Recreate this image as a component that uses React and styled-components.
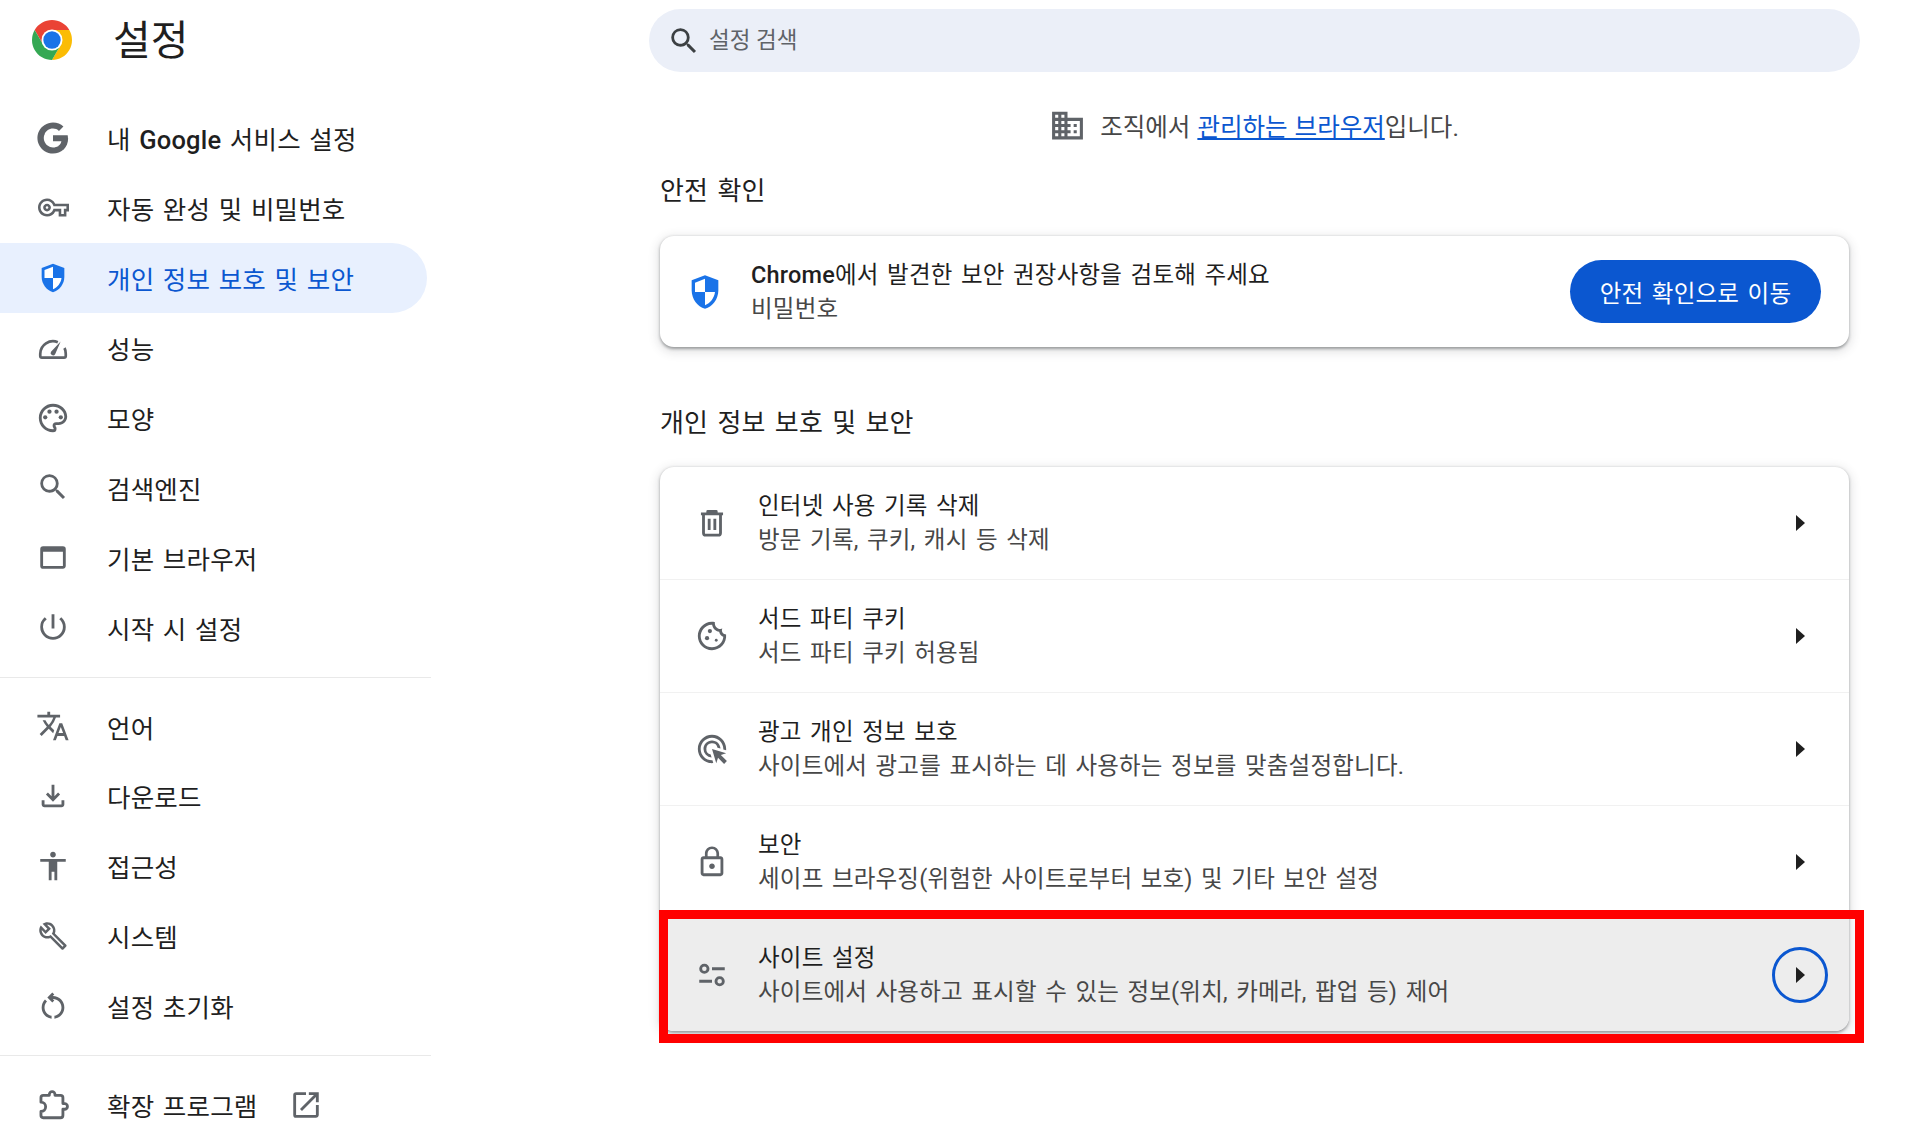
import React from 'react';
import styled, { createGlobalStyle } from 'styled-components';
import {
  MdOutlineVpnKey, MdOutlinePalette, MdSearch, MdOutlinePowerSettingsNew, MdTranslate,
  MdOutlineBuild, MdOpenInNew, MdOutlineCookie,
  MdOutlineAdsClick, MdLockOutline, MdOutlineDomain, MdAccessibility, MdOutlineRestartAlt,
  MdOutlineFileDownload, MdOutlineWebAsset,
} from 'react-icons/md';

const Global = createGlobalStyle`
  html, body { margin: 0; padding: 0; background: #fff; }
  body { font-family: Roboto, "Noto Sans CJK KR", "Noto Sans", sans-serif; color: #1f1f1f; }
  * { box-sizing: border-box; }
`;

const Page = styled.div`
  display: grid;
  grid-template-columns: 431px 1212px;
  column-gap: 217px;
  width: 1920px;
  height: 1125px;
  overflow: hidden;
`;

const Sidebar = styled.aside`
  display: flex;
  flex-direction: column;
`;

const Brand = styled.div`
  display: flex;
  align-items: center;
  gap: 41px;
  height: 103px;
  padding: 0 0 24px 32px;
`;

const BrandTitle = styled.h1`
  margin: 4px 0 0;
  font-size: 41px;
  font-weight: 400;
  line-height: 1;
`;

const NavGroup = styled.nav`
  display: flex;
  flex-direction: column;
`;

const NavItem = styled.div`
  display: flex;
  align-items: center;
  gap: 37px;
  height: 69.9px;
  width: ${(p) => (p.$active ? '427px' : '431px')};
  padding-left: 36px;
  font-size: 25.5px;
  letter-spacing: 0.2px;
  word-spacing: 2px;
  color: ${(p) => (p.$active ? '#0b57d0' : '#1f1f1f')};
  background: ${(p) => (p.$active ? '#e8f0fe' : 'transparent')};
  border-radius: 0 35px 35px 0;
  svg { color: ${(p) => (p.$active ? '#1a73e8' : '#5f6368')}; }
`;

const NavIcon = styled.span`
  display: flex;
  align-items: center;
  justify-content: center;
  width: 34px;
  height: 34px;
  flex: none;
  font-size: ${(p) => p.$size || 34}px;
`;

const NavLabel = styled.span`
  white-space: pre;
`;

const BrandWord = styled.span`
  font-weight: 500;
`;

const ExternalIcon = styled.span`
  display: flex;
  margin-left: -6px;
  font-size: 34px;
  color: #5f6368;
`;

const Divider = styled.hr`
  margin: ${(p) => p.$top}px 0 ${(p) => p.$bottom}px;
  border: 0;
  border-top: 1px solid #e9e9e9;
`;

const Main = styled.main`
  display: flex;
  flex-direction: column;
  padding-top: 9px;
`;

const SearchBar = styled.div`
  display: flex;
  align-items: center;
  gap: 8px;
  height: 63px;
  margin-left: 1px;
  padding-left: 18px;
  border-radius: 32px;
  background: #ebeff8;
  font-size: 22.5px;
  color: #5f6368;
  svg { color: #3c4043; }
`;

const SearchLabel = styled.span`
  margin-top: -5px;
`;

const ManagedLine = styled.div`
  display: flex;
  align-items: center;
  justify-content: center;
  height: 32px;
  margin-top: 37px;
  font-size: 24.5px;
  word-spacing: 1px;
  color: #474747;
  white-space: pre;
  svg { color: #5f6368; margin-right: 14px; }
`;

const ManagedLink = styled.a`
  color: #0b57d0;
  text-decoration: underline;
`;

const SectionTitle = styled.h2`
  margin: ${(p) => p.$top}px 0 ${(p) => p.$bottom}px 12px;
  height: 32px;
  line-height: 32px;
  font-size: 26px;
  letter-spacing: 0.2px;
  word-spacing: 2.5px;
  font-weight: 400;
  color: #1f1f1f;
`;

const Card = styled.section`
  position: relative;
  width: 1189px;
  margin-left: 12px;
  background: #fff;
  border-radius: 14px;
  box-shadow: 0 1.5px 3px rgba(60, 64, 67, 0.45), 0 3px 10px 3px rgba(60, 64, 67, 0.13);
`;

const SafetyRow = styled.div`
  display: flex;
  align-items: center;
  height: 111.4px;
  padding: 0 28px 0 25px;
  svg { color: #1a73e8; flex: none; }
`;

const SafetyText = styled.div`
  flex: 1;
  margin-left: 26px;
  padding-top: 2px;
`;

const PrimaryLine = styled.div`
  font-size: 23.5px;
  line-height: 34px;
  letter-spacing: 0.2px;
  word-spacing: 2.4px;
  color: #1f1f1f;
`;

const SecondaryLine = styled.div`
  font-size: 23.5px;
  line-height: 35px;
  letter-spacing: 0.2px;
  word-spacing: 2.4px;
  color: #474747;
`;

const ActionButton = styled.button`
  width: 251px;
  height: 63px;
  border: 0;
  border-radius: 32px;
  background: #0b57d0;
  color: #fff;
  font: inherit;
  font-size: 23.5px;
  letter-spacing: 0.2px;
  word-spacing: 2.4px;
`;

const Row = styled.div`
  position: relative;
  display: flex;
  align-items: center;
  height: 112.9px;
  padding: 0 28px 0 35px;
  border-bottom: ${(p) => (p.$last ? '0' : '1px solid #f1f1f1')};
  background: ${(p) => (p.$selected ? '#ededed' : 'transparent')};
  border-radius: ${(p) => (p.$last ? '0 0 14px 14px' : '0')};
`;

const RowIcon = styled.span`
  display: flex;
  align-items: center;
  justify-content: center;
  width: 34px;
  font-size: 34px;
  flex: none;
  color: #5f6368;
`;

const RowText = styled.div`
  flex: 1;
  margin-left: 29px;
  padding-top: 2px;
`;

const ArrowSlot = styled.span`
  display: flex;
  align-items: center;
  justify-content: center;
  width: 56px;
  height: 56px;
  margin-right: -7px;
  border-radius: 50%;
  border: ${(p) => (p.$focused ? '3px solid #0b57d0' : '0')};
`;

const Highlight = styled.div`
  position: absolute;
  left: -1px;
  right: -15px;
  top: -8.6px;
  bottom: -11.5px;
  border: 9px solid #f00;
  pointer-events: none;
`;

const ShieldIcon = ({ size = 34 }) => (
  <svg width={size} height={size} viewBox="0 0 24 24">
    <path fill="currentColor" d="M12 2 4 5v6.1c0 5 3.4 9.7 8 10.9 4.6-1.2 8-5.9 8-10.9V5z" />
    <path fill="#fff" d="M12 4.1 6 6.4V12h6zM12 12h6c-.4 3.6-2.9 6.8-6 7.9z" />
  </svg>
);

const ChromeLogo = () => (
  <svg width="40" height="40" viewBox="0 0 48 48" style={{ flex: 'none' }}>
    <path fill="#ea4335" d="M3.22 12A24 24 0 0 1 44.78 12L24 12 24 24 13.61 30z" />
    <path fill="#fbbc04" d="M44.78 12A24 24 0 0 1 24 48L34.39 30 24 24 24 12z" />
    <path fill="#34a853" d="M24 48A24 24 0 0 1 3.22 12L13.61 30 24 24 34.39 30z" />
    <circle cx="24" cy="24" r="12.6" fill="#fff" />
    <circle cx="24" cy="24" r="10.4" fill="#1a73e8" />
  </svg>
);

const GoogleG = () => (
  <svg width="34" height="34" viewBox="0 0 24 24" fill="currentColor">
    <path d="M22.56 12.25c0-.78-.07-1.53-.2-2.25H12v4.26h5.92c-.26 1.37-1.04 2.53-2.08 3.23v2.77h3.57c2.08-1.92 3.28-4.74 3.28-8.01z" />
    <path d="M12 23c2.97 0 5.46-.98 7.28-2.66l-3.57-2.77c-.98.66-2.23 1.06-3.71 1.06-2.86 0-5.29-1.93-6.16-4.53H2.18v2.84C3.99 20.53 7.7 23 12 23z" />
    <path d="M5.84 14.09c-.22-.66-.35-1.36-.35-2.09s.13-1.43.35-2.09V7.07H2.18C1.43 8.55 1 10.22 1 12s.43 3.45 1.18 4.93l2.85-2.22.81-.62z" />
    <path d="M12 5.38c1.62 0 3.06.56 4.21 1.64l3.15-3.15C17.45 2.09 14.97 1 12 1 7.7 1 3.99 3.47 2.18 7.07l3.66 2.84c.87-2.6 3.3-4.53 6.16-4.53z" />
  </svg>
);

const GaugeIcon = () => (
  <svg width="34" height="34" viewBox="0 0 24 24" fill="none" stroke="currentColor" strokeWidth="1.9" strokeLinejoin="round">
    <path d="M15.4 7.9A9 9 0 0 0 3 16v1.6q0 1.2 1.2 1.2h15.6q1.2 0 1.2-1.2V16q0-2.3-.9-4" />
    <path d="M10.6 14.6 17.4 7.4l-3.9 9a1.7 1.7 0 0 1-2.9-1.8z" fill="currentColor" stroke="none" />
  </svg>
);

const TuneIcon = () => (
  <svg width="34" height="34" viewBox="0 0 24 24" fill="none" stroke="currentColor" strokeWidth="2">
    <circle cx="6.6" cy="7.6" r="2.6" />
    <path d="M12 7.6h9M3 16.4h9" />
    <circle cx="17.4" cy="16.4" r="2.6" />
  </svg>
);

const TrashIcon = () => (
  <svg width="34" height="34" viewBox="0 0 24 24" fill="none" stroke="currentColor" strokeWidth="2" strokeLinejoin="round">
    <path d="M4.2 5.6h15.6M9 5.6V3.8h6v1.8" />
    <path d="M6 5.6V19q0 1.6 1.6 1.6h8.8q1.6 0 1.6-1.6V5.6" />
    <path d="M10 9v8M14 9v8" />
  </svg>
);

const PuzzleIcon = () => (
  <svg width="34" height="34" viewBox="0 0 24 24" fill="none" stroke="currentColor" strokeWidth="2" strokeLinejoin="round">
    <path d="M3.5 6.8Q3.5 5.2 5.1 5.2H9.4V4.6a2 2 0 0 1 4 0V5.2h3.9Q19 5.2 19 6.8V11h1.2a2 2 0 0 1 0 4H19v4.2Q19 21 17.3 21H5.1Q3.5 21 3.5 19.3V16.6a3.3 3.3 0 0 0 0-6.6z" />
  </svg>
);

const ArrowIcon = () => (
  <svg width="9" height="16" viewBox="0 0 9 16">
    <path fill="#1f1f1f" d="M0 0 9 8 0 16z" />
  </svg>
);

const navTop = [
  [<>내 <BrandWord>Google</BrandWord> 서비스 설정</>, <GoogleG />],
  ['자동 완성 및 비밀번호', <MdOutlineVpnKey />, false, 31],
  ['개인 정보 보호 및 보안', <ShieldIcon />, true],
  ['성능', <GaugeIcon />],
  ['모양', <MdOutlinePalette />],
  ['검색엔진', <MdSearch />],
  ['기본 브라우저', <MdOutlineWebAsset />, false, 37],
  ['시작 시 설정', <MdOutlinePowerSettingsNew />],
];

const navMiddle = [
  ['언어', <MdTranslate />],
  ['다운로드', <MdOutlineFileDownload />],
  ['접근성', <MdAccessibility />],
  ['시스템', <MdOutlineBuild />, false, 30],
  ['설정 초기화', <MdOutlineRestartAlt />],
];

const privacyRows = [
  ['인터넷 사용 기록 삭제', '방문 기록, 쿠키, 캐시 등 삭제', <TrashIcon />],
  ['서드 파티 쿠키', '서드 파티 쿠키 허용됨', <MdOutlineCookie />],
  ['광고 개인 정보 보호', '사이트에서 광고를 표시하는 데 사용하는 정보를 맞춤설정합니다.', <MdOutlineAdsClick />],
  ['보안', '세이프 브라우징(위험한 사이트로부터 보호) 및 기타 보안 설정', <MdLockOutline />],
  ['사이트 설정', '사이트에서 사용하고 표시할 수 있는 정보(위치, 카메라, 팝업 등) 제어', <TuneIcon />],
];

const renderNav = ([label, icon, active, size], i) => (
  <NavItem key={i} $active={active}>
    <NavIcon $size={size}>{icon}</NavIcon>
    <NavLabel>{label}</NavLabel>
  </NavItem>
);

export default function App() {
  return (
    <>
      <Global />
      <Page>
        <Sidebar>
          <Brand>
            <ChromeLogo />
            <BrandTitle>설정</BrandTitle>
          </Brand>
          <NavGroup>{navTop.map(renderNav)}</NavGroup>
          <Divider $top={15} $bottom={13} />
          <NavGroup>{navMiddle.map(renderNav)}</NavGroup>
          <Divider $top={14} $bottom={14} />
          <NavGroup>
            <NavItem>
              <NavIcon><PuzzleIcon /></NavIcon>
              <NavLabel>확장 프로그램</NavLabel>
              <ExternalIcon><MdOpenInNew /></ExternalIcon>
            </NavItem>
          </NavGroup>
        </Sidebar>
        <Main>
          <SearchBar>
            <MdSearch size={34} />
            <SearchLabel>설정 검색</SearchLabel>
          </SearchBar>
          <ManagedLine>
            <MdOutlineDomain size={37} />
            조직에서 <ManagedLink>관리하는 브라우저</ManagedLink>입니다.
          </ManagedLine>
          <SectionTitle $top={33.5} $bottom={29.5}>안전 확인</SectionTitle>
          <Card>
            <SafetyRow>
              <ShieldIcon size={40} />
              <SafetyText>
                <PrimaryLine><BrandWord>Chrome</BrandWord>에서 발견한 보안 권장사항을 검토해 주세요</PrimaryLine>
                <SecondaryLine>비밀번호</SecondaryLine>
              </SafetyText>
              <ActionButton>안전 확인으로 이동</ActionButton>
            </SafetyRow>
          </Card>
          <SectionTitle $top={60} $bottom={27.6}>개인 정보 보호 및 보안</SectionTitle>
          <Card>
            {privacyRows.map(([title, sub, icon], i) => {
              const last = i === privacyRows.length - 1;
              return (
                <Row key={title} $last={last} $selected={last}>
                  <RowIcon>{icon}</RowIcon>
                  <RowText>
                    <PrimaryLine>{title}</PrimaryLine>
                    <SecondaryLine>{sub}</SecondaryLine>
                  </RowText>
                  <ArrowSlot $focused={last}><ArrowIcon /></ArrowSlot>
                  {last && <Highlight />}
                </Row>
              );
            })}
          </Card>
        </Main>
      </Page>
    </>
  );
}
